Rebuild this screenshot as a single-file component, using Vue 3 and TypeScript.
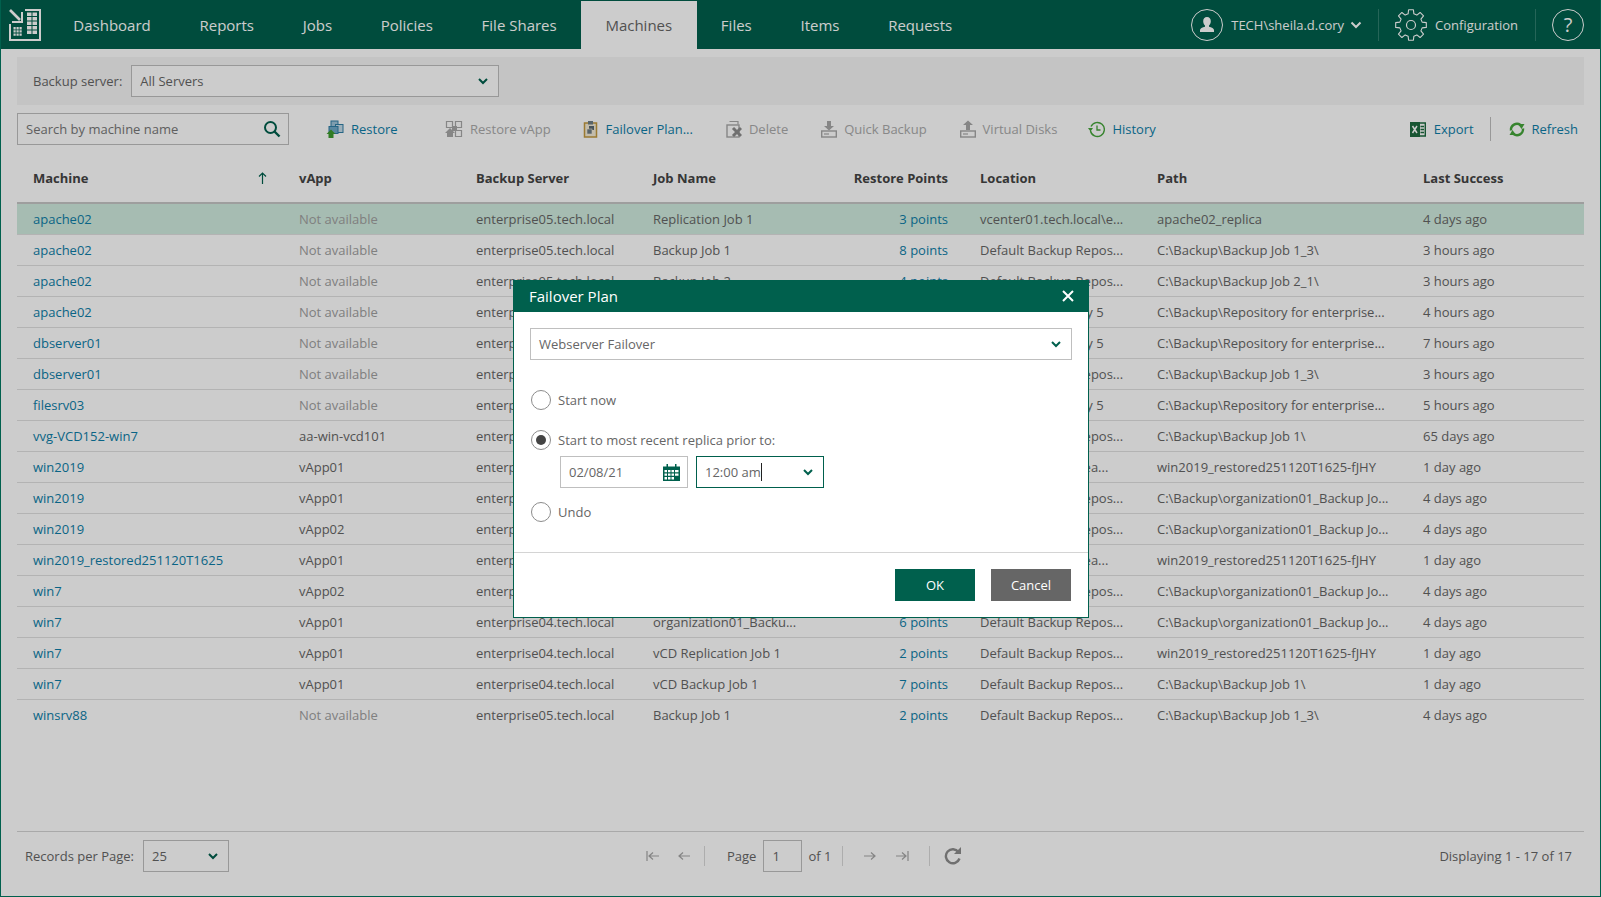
<script setup lang="ts">
interface Row {
  machine: string
  vapp: string
  server: string
  job: string
  points: string
  location: string
  path: string
  last: string
}

const NA = 'Not available'
const E5 = 'enterprise05.tech.local'
const E4 = 'enterprise04.tech.local'
const DEF = 'Default Backup Repos...'
const REPO = 'Backup Repository 5'
const REPATH = 'C:\\Backup\\Repository for enterprise...'
const ORG = 'C:\\Backup\\organization01_Backup Jo...'
const REST = 'win2019_restored251120T1625-fJHY'
const CLOUD = 'Default Backup Rea...'

const rows: Row[] = [
  { machine: 'apache02', vapp: NA, server: E5, job: 'Replication Job 1', points: '3 points', location: 'vcenter01.tech.local\\e...', path: 'apache02_replica', last: '4 days ago' },
  { machine: 'apache02', vapp: NA, server: E5, job: 'Backup Job 1', points: '8 points', location: DEF, path: 'C:\\Backup\\Backup Job 1_3\\', last: '3 hours ago' },
  { machine: 'apache02', vapp: NA, server: E5, job: 'Backup Job 2', points: '4 points', location: DEF, path: 'C:\\Backup\\Backup Job 2_1\\', last: '3 hours ago' },
  { machine: 'apache02', vapp: NA, server: E5, job: 'Backup Job 3', points: '5 points', location: REPO, path: REPATH, last: '4 hours ago' },
  { machine: 'dbserver01', vapp: NA, server: E5, job: 'Backup Job 3', points: '5 points', location: REPO, path: REPATH, last: '7 hours ago' },
  { machine: 'dbserver01', vapp: NA, server: E5, job: 'Backup Job 1', points: '8 points', location: DEF, path: 'C:\\Backup\\Backup Job 1_3\\', last: '3 hours ago' },
  { machine: 'filesrv03', vapp: NA, server: E5, job: 'Backup Job 3', points: '5 points', location: REPO, path: REPATH, last: '5 hours ago' },
  { machine: 'vvg-VCD152-win7', vapp: 'aa-win-vcd101', server: E4, job: 'vCD Backup Job 1', points: '7 points', location: DEF, path: 'C:\\Backup\\Backup Job 1\\', last: '65 days ago' },
  { machine: 'win2019', vapp: 'vApp01', server: E4, job: 'vCD Replication Job 1', points: '2 points', location: CLOUD, path: REST, last: '1 day ago' },
  { machine: 'win2019', vapp: 'vApp01', server: E4, job: 'organization01_Backu...', points: '6 points', location: DEF, path: ORG, last: '4 days ago' },
  { machine: 'win2019', vapp: 'vApp02', server: E4, job: 'organization01_Backu...', points: '6 points', location: DEF, path: ORG, last: '4 days ago' },
  { machine: 'win2019_restored251120T1625', vapp: 'vApp01', server: E4, job: 'vCD Replication Job 1', points: '2 points', location: CLOUD, path: REST, last: '1 day ago' },
  { machine: 'win7', vapp: 'vApp02', server: E4, job: 'organization01_Backu...', points: '6 points', location: DEF, path: ORG, last: '4 days ago' },
  { machine: 'win7', vapp: 'vApp01', server: E4, job: 'organization01_Backu...', points: '6 points', location: DEF, path: ORG, last: '4 days ago' },
  { machine: 'win7', vapp: 'vApp01', server: E4, job: 'vCD Replication Job 1', points: '2 points', location: DEF, path: REST, last: '1 day ago' },
  { machine: 'win7', vapp: 'vApp01', server: E4, job: 'vCD Backup Job 1', points: '7 points', location: DEF, path: 'C:\\Backup\\Backup Job 1\\', last: '1 day ago' },
  { machine: 'winsrv88', vapp: NA, server: E5, job: 'Backup Job 1', points: '2 points', location: DEF, path: 'C:\\Backup\\Backup Job 1_3\\', last: '4 days ago' },
]

const tabs: string[] = ['Dashboard', 'Reports', 'Jobs', 'Policies', 'File Shares', 'Machines', 'Files', 'Items', 'Requests']

function gearPath(cx: number, cy: number, r1: number, r2: number, teeth: number): string {
  const pts: string[] = []
  const step = (Math.PI * 2) / teeth
  for (let i = 0; i < teeth; i++) {
    const a = i * step - Math.PI / 2
    const w = step * 0.2
    const list: [number, number][] = [
      [r1, a - step * 0.32],
      [r2, a - w],
      [r2, a + w],
      [r1, a + step * 0.32],
    ]
    for (const [r, t] of list) {
      pts.push(`${(cx + r * Math.cos(t)).toFixed(2)} ${(cy + r * Math.sin(t)).toFixed(2)}`)
    }
  }
  return 'M' + pts.join('L') + 'Z'
}
const gear = gearPath(16, 16, 11.5, 15.5, 8)
</script>

<template>
  <div class="page">
    <header class="topbar">
      <svg class="logo" width="32" height="32" viewBox="0 0 32 32">
        <path d="M1 1L11 11" stroke="#fff" stroke-width="2.600" />
        <path d="M13 3V13H3" fill="none" stroke="#fff" stroke-width="2" />
        <path d="M16 1H31V31H1V15" fill="none" stroke="#fff" stroke-width="2" />
        <path d="M18 3.500h4.500v3.500H18zM23.500 3.500H28v3.500h-4.500zM18 8h4.500v3.500H18zM23.500 8H28v3.500h-4.500zM18 12.500h4.500V16H18zM23.500 12.500H28V16h-4.500zM18 17h4.500v3.500H18zM23.500 17H28v3.500h-4.500zM18 21.500h4.500V25H18zM23.500 21.500H28V25h-4.500z" fill="#fff" />
        <path d="M4.500 18h2.200v2.400H4.500zM7.500 18h2.200v2.400H7.500zM10.500 18h2.200v2.400h-2.200zM4.500 21.200h2.200v2.400H4.500zM7.500 21.200h2.200v2.400H7.500zM10.500 21.200h2.200v2.400h-2.200zM4.500 24.400h2.200v2.400H4.500zM7.500 24.400h2.200v2.400H7.500zM10.500 24.400h2.200v2.400h-2.200z" fill="#fff" />
      </svg>
      <nav class="tabs">
        <a v-for="t in tabs" :key="t" class="tab" :class="{ active: t === 'Machines' }">{{ t }}</a>
      </nav>
      <div class="user">
        <span class="circle">
          <svg width="20" height="20" viewBox="0 0 20 20"><path d="M10 2c2.500 0 3.800 1.800 3.800 4.200 0 1.800-.8 3.300-1.800 4.200v1.300c2.600.7 5 1.700 5 3.300v2H3v-2c0-1.600 2.400-2.600 5-3.300v-1.300C7 9.500 6.200 8 6.200 6.200 6.200 3.800 7.500 2 10 2z" fill="#fff" /></svg>
        </span>
        <span class="user-name">TECH\sheila.d.cory</span>
        <svg class="user-chev" width="12" height="8" viewBox="0 0 12 8"><path d="M1.500 1.500L6 6l4.500-4.500" fill="none" stroke="#fff" stroke-width="2" /></svg>
      </div>
      <span class="top-sep"></span>
      <div class="config">
        <svg width="32" height="32" viewBox="0 0 32 32"><path :d="gear" fill="none" stroke="#fff" stroke-width="1.1" stroke-linejoin="round" /><circle cx="16" cy="16" r="4.500" fill="none" stroke="#fff" stroke-width="1.200" /></svg>
        <span>Configuration</span>
      </div>
      <span class="top-sep"></span>
      <span class="circle help">?</span>
    </header>

    <main class="content">
      <section class="filter">
        <label class="filter-label">Backup server:</label>
        <div class="select server-select">
          <span>All Servers</span>
          <svg class="chev" width="10" height="7" viewBox="0 0 10 7"><path d="M1 1l4 4 4-4" fill="none" stroke="#00604d" stroke-width="2" /></svg>
        </div>
      </section>

      <section class="toolbar">
        <div class="search">
          <span>Search by machine name</span>
          <svg width="18" height="18" viewBox="0 0 18 18"><circle cx="7.500" cy="7.500" r="5.500" fill="none" stroke="#00604d" stroke-width="2" /><path d="M11.500 11.500L16.500 16.500" stroke="#00604d" stroke-width="2.400" /></svg>
        </div>

        <a class="tool restore">
          <svg width="18" height="18" viewBox="0 0 18 18"><rect x="5" y="1" width="7" height="7" fill="#9ec5da" stroke="#2f7fa6" /><rect x="9.500" y="4.500" width="7.500" height="8" fill="#c5dce9" stroke="#2f7fa6" /><rect x="3" y="6.500" width="9" height="7" fill="#6fa9c9" stroke="#2f7fa6" /><path d="M5 9.500L9.500 14H7.500v4h-5v-4H.5z" fill="#3e9b2d" /></svg>
          <span>Restore</span>
        </a>
        <a class="tool off">
          <svg width="18" height="18" viewBox="0 0 18 18"><path d="M1.500 1.500h6v6h-6zM10.500 1.500h6v6h-6zM10.500 10.500h6v6h-6z" fill="none" stroke="#a8a8a8" stroke-width="1.200" /><path d="M7 6h5v5H7z" fill="#a8a8a8" /><path d="M5 8l5 5H8v4H2v-4H0z" fill="#a8a8a8" /></svg>
          <span>Restore vApp</span>
        </a>
        <a class="tool">
          <svg width="16" height="18" viewBox="0 0 16 18"><rect x="1.500" y="3" width="12" height="14" fill="#f4ecd6" stroke="#c2993f" stroke-width="1.500" /><rect x="5" y="1" width="5" height="3.500" fill="#6f7d85" /><rect x="6" y="6" width="5" height="4" fill="#5b6a72" /><rect x="4" y="9" width="5" height="5" fill="#6f7d85" stroke="#f4ecd6" stroke-width=".6" /></svg>
          <span>Failover Plan...</span>
        </a>
        <a class="tool off nudge">
          <svg width="16" height="18" viewBox="0 0 16 18"><path d="M3.500 1.500h8.500v3" fill="none" stroke="#a8a8a8" stroke-width="1.200" /><rect x="1" y="5" width="12" height="12" fill="none" stroke="#a8a8a8" stroke-width="1.400" /><path d="M7 8l8 8M15 8l-8 8" stroke="#8c8c8c" stroke-width="3" /></svg>
          <span>Delete</span>
        </a>
        <a class="tool off nudge">
          <svg width="16" height="18" viewBox="0 0 16 18"><path d="M6 1h4v5h3L8 10.500 3 6h3z" fill="#a8a8a8" /><rect x=".7" y="11" width="14.600" height="6" fill="none" stroke="#a8a8a8" stroke-width="1.400" /><path d="M3 14h5" stroke="#a8a8a8" stroke-width="1.200" /></svg>
          <span>Quick Backup</span>
        </a>
        <a class="tool off nudge">
          <svg width="16" height="18" viewBox="0 0 16 18"><path d="M8 .5L13 5h-3v5H6V5H3z" fill="#a8a8a8" /><rect x=".7" y="11" width="14.600" height="6" fill="none" stroke="#a8a8a8" stroke-width="1.400" /><path d="M3 14h5" stroke="#a8a8a8" stroke-width="1.200" /></svg>
          <span>Virtual Disks</span>
        </a>
        <a class="tool history">
          <svg width="17" height="17" viewBox="0 0 17 17"><path d="M3 5.500A7 7 0 1 1 2.500 10" fill="none" stroke="#45a53a" stroke-width="1.400" /><path d="M0 7.500h5L2.500 11z" fill="#45a53a" transform="translate(0 -.5)" /><path d="M9 4.500v4.500h3.500" fill="none" stroke="#45a53a" stroke-width="1.300" /></svg>
          <span>History</span>
        </a>
        <span class="grow"></span>
        <a class="tool export">
          <svg width="16" height="17" viewBox="0 0 16 17"><rect x="0" y="1" width="10" height="15" fill="#1d6b3f" /><path d="M10 2h5.300v13H10" fill="none" stroke="#1d6b3f" stroke-width="1.400" /><path d="M10.500 5.500h3.500M10.500 8.500h3.500M10.500 11.500h3.500" stroke="#1d6b3f" stroke-width="1.600" /><path d="M2.500 5l4.500 7M7 5l-4.500 7" stroke="#fff" stroke-width="1.500" /></svg>
          <span>Export</span>
        </a>
        <span class="tool-sep"></span>
        <a class="tool refresh">
          <svg width="16" height="17" viewBox="0 0 16 17"><path d="M2 9.500A6 6 0 0 1 11.500 4" fill="none" stroke="#45a53a" stroke-width="2.400" /><path d="M9 3h6.500l-3 5z" fill="#45a53a" /><path d="M14 7.500A6 6 0 0 1 4.500 13" fill="none" stroke="#45a53a" stroke-width="2.400" /><path d="M7 14H.5l3-5z" fill="#45a53a" /></svg>
          <span>Refresh</span>
        </a>
      </section>

      <table class="grid">
        <colgroup>
          <col style="width: 266px" />
          <col style="width: 177px" />
          <col style="width: 177px" />
          <col style="width: 177px" />
          <col style="width: 150px" />
          <col style="width: 177px" />
          <col style="width: 266px" />
          <col style="width: 177px" />
        </colgroup>
        <thead>
          <tr>
            <th>
              <div class="sort">
                <span>Machine</span>
                <svg width="9" height="12" viewBox="0 0 9 12"><path d="M4.500 1v11M1 4.500L4.500 1 8 4.500" fill="none" stroke="#00604d" stroke-width="1.200" /></svg>
              </div>
            </th>
            <th>vApp</th>
            <th>Backup Server</th>
            <th>Job Name</th>
            <th class="num">Restore Points</th>
            <th>Location</th>
            <th>Path</th>
            <th>Last Success</th>
          </tr>
        </thead>
        <tbody>
          <tr v-for="(r, i) in rows" :key="i" :class="{ selected: i === 0 }">
            <td><a class="link">{{ r.machine }}</a></td>
            <td :class="{ muted: r.vapp === NA }">{{ r.vapp }}</td>
            <td>{{ r.server }}</td>
            <td>{{ r.job }}</td>
            <td class="num"><a class="link">{{ r.points }}</a></td>
            <td>{{ r.location }}</td>
            <td>{{ r.path }}</td>
            <td>{{ r.last }}</td>
          </tr>
        </tbody>
      </table>

      <div class="spacer"></div>

      <footer class="pager">
        <div class="per-page">
          <span>Records per Page:</span>
          <div class="select small-select">
            <span>25</span>
            <svg class="chev" width="10" height="7" viewBox="0 0 10 7"><path d="M1 1l4 4 4-4" fill="none" stroke="#00604d" stroke-width="2" /></svg>
          </div>
        </div>
        <div class="pages">
          <svg class="p-first" width="14" height="10" viewBox="0 0 14 10"><path d="M1 0v10M13 5H3M7 1.500L3 5l4 3.500" fill="none" stroke="#a6a6a6" stroke-width="1.200" /></svg>
          <svg class="p-prev" width="12" height="10" viewBox="0 0 12 10"><path d="M12 5H1M5 1.500L1 5l4 3.500" fill="none" stroke="#a6a6a6" stroke-width="1.200" /></svg>
          <span class="p-sep"></span>
          <span class="p-label">Page</span>
          <span class="p-input">1</span>
          <span class="p-of">of 1</span>
          <span class="p-sep"></span>
          <svg class="p-next" width="12" height="10" viewBox="0 0 12 10"><path d="M0 5h11M7 1.500L11 5 7 8.500" fill="none" stroke="#a6a6a6" stroke-width="1.200" /></svg>
          <svg class="p-last" width="14" height="10" viewBox="0 0 14 10"><path d="M13 0v10M1 5h10M7 1.500L11 5 7 8.500" fill="none" stroke="#a6a6a6" stroke-width="1.200" /></svg>
          <span class="p-sep"></span>
          <svg class="p-refresh" width="18" height="18" viewBox="0 0 18 18"><path d="M14.500 5A7 7 0 1 0 15.500 11.500" fill="none" stroke="#8c8c8c" stroke-width="2.400" /><path d="M17 0v7h-7z" fill="#8c8c8c" /></svg>
        </div>
        <div class="display">Displaying 1 - 17 of 17</div>
      </footer>
    </main>

    <div class="mask"></div>

    <section class="dialog">
      <header class="dialog-head">
        <span>Failover Plan</span>
        <svg width="12" height="12" viewBox="0 0 12 12"><path d="M1 1l10 10M11 1L1 11" stroke="#fff" stroke-width="2" /></svg>
      </header>
      <div class="dialog-body">
        <div class="select plan-select">
          <span>Webserver Failover</span>
          <svg class="chev" width="10" height="7" viewBox="0 0 10 7"><path d="M1 1l4 4 4-4" fill="none" stroke="#00604d" stroke-width="2" /></svg>
        </div>
        <label class="radio first"><span class="dot"></span>Start now</label>
        <label class="radio second"><span class="dot on"></span>Start to most recent replica prior to:</label>
        <div class="when">
          <div class="select date">
            <span>02/08/21</span>
            <svg width="17" height="17" viewBox="0 0 17 17"><path d="M3.500 0h1.500v3H3.500zM12 0h1.500v3H12z" fill="#00604d" /><path d="M0 2.500h17V17H0z" fill="#00604d" /><path d="M1.500 6h2.500v2.200H1.500zM5 6h2.500v2.200H5zM8.500 6h2.500v2.200H8.500zM12 6h3.500v2.200H12zM1.500 9.500h2.500v2.200H1.500zM5 9.500h2.500v2.200H5zM8.500 9.500h2.500v2.200H8.500zM12 9.500h3.500v2.200H12zM1.500 13h2.500v2.500H1.500zM5 13h2.500v2.500H5zM8.500 13h2.500v2.500H8.500z" fill="#fff" /></svg>
          </div>
          <div class="select time">
            <span class="time-val">12:00 am<i class="caret"></i></span>
            <svg class="chev" width="10" height="7" viewBox="0 0 10 7"><path d="M1 1l4 4 4-4" fill="none" stroke="#00604d" stroke-width="2" /></svg>
          </div>
        </div>
        <label class="radio third"><span class="dot"></span>Undo</label>
      </div>
      <footer class="dialog-foot">
        <button class="btn ok">OK</button>
        <button class="btn cancel">Cancel</button>
      </footer>
    </section>
  </div>
</template>

<style>
html, body { margin: 0; padding: 0; background: #fff; }
</style>

<style scoped>
.page {
  position: relative;
  box-sizing: border-box;
  width: 1601px;
  height: 897px;
  display: flex;
  flex-direction: column;
  background: #fff;
  border: 1px solid #00604d;
  border-top: 0;
  font: 13px "Open Sans", sans-serif;
  color: #666;
  overflow: hidden;
}
.topbar {
  height: 49px;
  margin: 0 -1px;
  flex: none;
  background: #00604d;
  display: flex;
  align-items: center;
  color: #fff;
}
.logo { margin-left: 9px; flex: none; }
.tabs { display: flex; align-self: stretch; margin-left: 8px; padding-top: 1px; }
.tab {
  display: flex;
  align-items: center;
  padding: 0 24.35px 1px;
  font-size: 15px;
  color: #fff;
}
.tab.active { background: #fff; color: #666; }
.user { margin-left: auto; margin-right: -1px; display: flex; align-items: center; }
.circle {
  box-sizing: border-box;
  width: 32px;
  height: 32px;
  border: 1px solid #fff;
  border-radius: 50%;
  display: flex;
  align-items: center;
  justify-content: center;
}
.user-name { margin-left: 8px; font-size: 13px; }
.user-chev { margin-left: 6px; }
.top-sep { width: 1px; height: 32px; background: #2f7f6f; margin: 0 16px 0 17px; }
.config { display: flex; align-items: center; gap: 8px; font-size: 13px; }
.help { font-size: 20px; margin-right: 17px; }
.content {
  flex: 1;
  min-height: 0;
  display: flex;
  flex-direction: column;
  padding: 8px 16px 24px;
}
.filter {
  height: 48px;
  flex: none;
  background: #f5f5f5;
  display: flex;
  align-items: center;
  padding-left: 16px;
}
.filter-label { margin-right: 9px; }
.select {
  box-sizing: border-box;
  height: 32px;
  background: #fff;
  border: 1px solid #bfbfbf;
  display: flex;
  align-items: center;
  justify-content: space-between;
  padding: 0 10px 0 8px;
}
.server-select { width: 368px; }
.toolbar {
  height: 32px;
  margin-top: 8px;
  flex: none;
  display: flex;
  align-items: center;
  gap: 32px;
}
.search {
  box-sizing: border-box;
  width: 272px;
  height: 32px;
  border: 1px solid #bfbfbf;
  background: #fff;
  display: flex;
  align-items: center;
  justify-content: space-between;
  padding: 0 7px 0 8px;
  margin-right: 5px;
  color: #777;
}
.tool {
  display: flex;
  align-items: center;
  gap: 7px;
  color: #0d7ea8;
  white-space: nowrap;
}
.tool svg { flex: none; }
.tool.off { color: #aaa; }
.tool.restore { min-width: 87px; }
.tool.nudge { margin-left: 1px; }
.tool.history { margin-left: -1px; }
.grow { flex: 1; }
.tool.export { margin-right: -16px; gap: 8px; }
.tool-sep { width: 1px; height: 24px; background: #bfbfbf; }
.tool.refresh { margin-left: -14px; margin-right: 6px; gap: 7px; }
.grid {
  margin-top: 8px;
  table-layout: fixed;
  border-collapse: separate;
  border-spacing: 0;
  width: 1567px;
  flex: none;
}
.grid th {
  height: 51px;
  box-sizing: border-box;
  padding: 0 16px;
  text-align: left;
  font-weight: 700;
  color: #444;
  border-bottom: 2px solid #c6c6c6;
  white-space: nowrap;
}
.sort { display: flex; align-items: center; justify-content: space-between; }
.grid td {
  height: 31px;
  box-sizing: border-box;
  padding: 0 16px;
  border-bottom: 1px solid #e0e0e0;
  white-space: nowrap;
  overflow: hidden;
}
.grid tr:last-child td { border-bottom-color: transparent; }
.grid .num { text-align: right; }
.selected td { background: #d0ecdf; }
.link { color: #0d7ea8; }
.muted { color: #a0a0a0; }
.spacer { flex: 1; }
.pager {
  box-sizing: border-box;
  height: 41px;
  flex: none;
  padding-top: 8px;
  border-top: 1px solid #d4d4d4;
  display: grid;
  grid-template-columns: 629px 1fr auto;
  align-items: center;
}
.per-page { display: flex; align-items: center; gap: 9px; padding-left: 8px; }
.small-select { width: 86px; }
.pages { display: flex; align-items: center; height: 32px; }
.p-prev { margin-left: 18px; }
.pages .p-sep { width: 1px; height: 20px; background: #d9d9d9; }
.pages .p-prev + .p-sep { margin-left: 14px; }
.p-label { margin-left: 22px; }
.p-input {
  box-sizing: border-box;
  width: 39px;
  height: 32px;
  margin-left: 7px;
  padding-left: 8px;
  background: #fff;
  border: 1px solid #bfbfbf;
  line-height: 30px;
}
.p-of { margin-left: 6px; margin-right: 11px; }
.p-next { margin-left: 21px; }
.p-last { margin-left: 19px; margin-right: 20px; }
.p-refresh { margin-left: 14px; }
.display { padding-right: 12px; }
.mask {
  position: absolute;
  inset: 0 -1px -1px -1px;
  background: rgba(0, 0, 0, 0.2);
}
.dialog {
  position: absolute;
  left: 512px;
  top: 280px;
  box-sizing: border-box;
  width: 576px;
  height: 338px;
  background: #fff;
  border: 1px solid #00604d;
  display: flex;
  flex-direction: column;
}
.dialog-head {
  box-sizing: border-box;
  height: 31px;
  margin: 0;
  flex: none;
  background: #00604d;
  color: #fff;
  font-size: 15px;
  display: flex;
  align-items: center;
  justify-content: space-between;
  padding: 0 14px 2px 15px;
}
.dialog-body { flex: 1; padding: 16px; }
.plan-select { width: 542px; }
.radio { display: flex; align-items: center; gap: 7px; height: 20px; margin-left: 1px; }
.radio.first { margin-top: 30px; }
.radio.second { margin-top: 20px; }
.radio.third { margin-top: 14px; }
.dot {
  box-sizing: border-box;
  width: 20px;
  height: 20px;
  border: 1px solid #8c8c8c;
  border-radius: 50%;
  background: #fff;
  position: relative;
}
.dot.on::after {
  content: "";
  position: absolute;
  left: 4px;
  top: 4px;
  width: 10px;
  height: 10px;
  border-radius: 50%;
  background: #444;
}
.when { display: flex; gap: 8px; margin: 6px 0 0 30px; }
.date { width: 128px; padding-right: 7px; }
.time { width: 128px; border-color: #00604d; }
.time-val { display: inline-flex; align-items: center; }
.caret { width: 1px; height: 18px; background: #222; margin-left: 0; }
.dialog-foot {
  height: 65px;
  flex: none;
  box-sizing: border-box;
  border-top: 1px solid #d4d4d4;
  padding-top: 16px;
  padding-right: 17px;
  display: flex;
  justify-content: flex-end;
  gap: 16px;
}
.btn {
  width: 80px;
  height: 32px;
  border: 0;
  color: #fff;
  font: 13px "Open Sans", sans-serif;
}
.ok { background: #00604d; }
.cancel { background: #666; }
</style>
